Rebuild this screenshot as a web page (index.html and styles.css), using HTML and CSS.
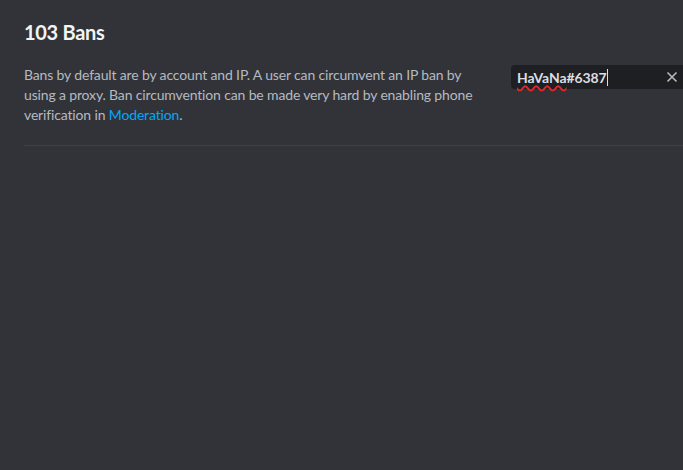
FILE: index.html
```html
<!DOCTYPE html>
<html>

<head>
	<link rel="stylesheet" href="styles.css">
</head>

<body>
	<div class="page">
		<h1>103 Bans</h1>
		<div class="intro">
			<p class="desc">Bans by default are by account and IP. A user can circumvent an IP ban by using a proxy. Ban circumvention can be made very hard by enabling phone verification in <a href="#">Moderation</a>.</p>
			<div class="search">
				<span class="query"><span class="typo">HaVaNa</span>#6387</span><span class="caret"></span>
				<svg class="clear" width="12" height="12" viewBox="0 0 12 12">
					<path d="M1.5 1.5 L10.5 10.5 M10.5 1.5 L1.5 10.5" stroke="#b5bac1" stroke-width="1.6" fill="none" />
				</svg>
			</div>
		</div>
	</div>
</body>

</html>
```

FILE: styles.css
```css
body {
	margin: 0;
	background-color: #313338;
	font-family: "Lato", "Noto Sans", sans-serif;
}

.page {
	padding: 20px 0 0 24px;
}

h1 {
	margin: 0 0 21px;
	font-size: 20px;
	line-height: 24px;
	font-weight: 700;
	letter-spacing: -0.3px;
	color: #f2f3f5;
}

.intro {
	display: flex;
	gap: 24px;
	padding-bottom: 20px;
	border-bottom: solid 1px #3f4147;
}

.desc {
	flex: 1;
	margin: 0;
	font-size: 14px;
	line-height: 20px;
	letter-spacing: -0.15px;
	color: #b5bac1;
}

.desc a {
	color: #00a8fc;
	text-decoration: none;
}

.search {
	width: 172px;
	height: 24px;
	flex-shrink: 0;
	display: flex;
	align-items: center;
	padding-left: 6px;
	box-sizing: border-box;
	background-color: #1e1f22;
	border-radius: 4px 0 0 4px;
}

.query {
	font-size: 14px;
	font-weight: 700;
	letter-spacing: -0.1px;
	color: #dbdee1;
}

.typo {
	text-decoration: underline wavy #e02828;
	text-decoration-thickness: 1.5px;
	text-underline-offset: 2px;
}

.caret {
	width: 1px;
	height: 17px;
	background-color: #dbdee1;
}

.clear {
	margin-left: auto;
	margin-right: 5px;
}
```
